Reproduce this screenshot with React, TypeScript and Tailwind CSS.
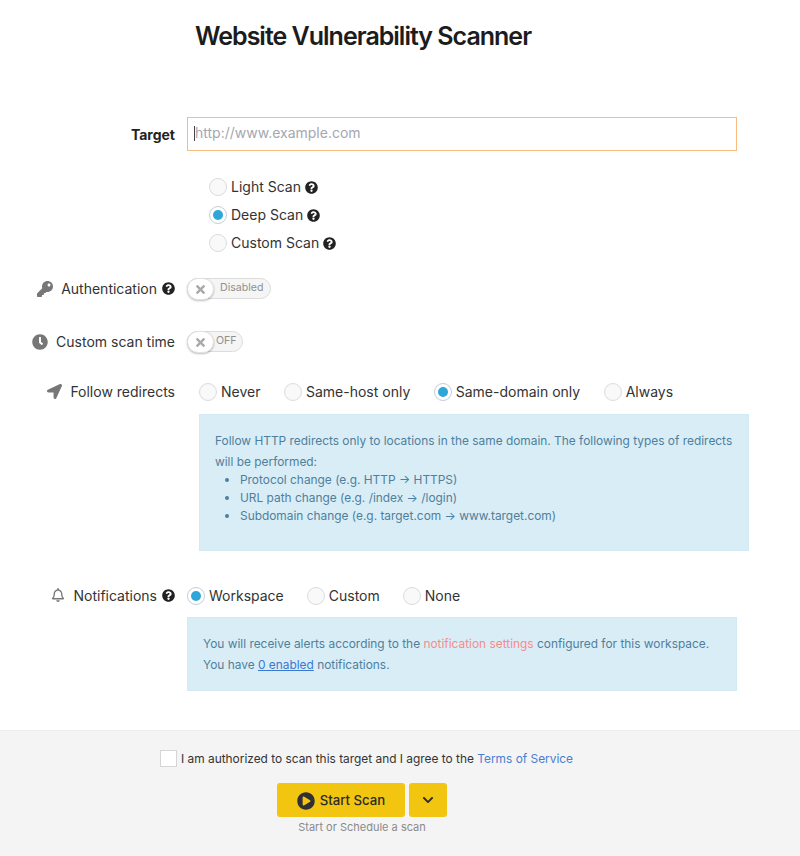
import { FaChevronDown, FaClock, FaKey, FaLocationArrow, FaPlayCircle, FaQuestionCircle, FaRegBell, FaTimes } from "react-icons/fa";
import type { ReactNode } from "react";

function Radio({ label, checked, help }: { label: string; checked?: boolean; help?: boolean }) {
  return (
    <label className="flex items-center h-[18px] text-[14px] text-[#333]">
      <span className={`w-[18px] h-[18px] rounded-full border flex items-center justify-center shrink-0 ${checked ? "border-[#c3ced9] bg-white" : "border-[#d9dcdf] bg-[#f9f9f9]"}`}>
        {checked && <span className="w-[10px] h-[10px] rounded-full bg-[#2ea6d8]" />}
      </span>
      <span className="ml-[4px] pb-px">{label}</span>
      {help && <FaQuestionCircle className="ml-[4px] text-[13px] text-[#222]" />}
    </label>
  );
}

function Toggle({ label, width, labelLeft }: { label: string; width: string; labelLeft: string }) {
  return (
    <div className={`relative h-[21px] rounded-full border border-[#dcdcdc] bg-[#f5f5f5] ${width}`}>
      <div className="absolute left-[-1px] top-[-1px] w-[27px] h-[22px] rounded-full bg-white border border-[#e2e2e2] shadow-[0_1px_2px_rgba(0,0,0,0.25)] flex items-center justify-center">
        <FaTimes className="text-[13px] text-[#a9a9a9]" />
      </div>
      <span className={`absolute top-[1px] text-[10.6px] leading-[16px] text-[#8f8f8f] ${labelLeft}`}>{label}</span>
    </div>
  );
}

function Row({ label, icon, help, className, labelClass, children }: { label: string; icon?: ReactNode; help?: boolean; className?: string; labelClass?: string; children: ReactNode }) {
  return (
    <div className={`flex items-center ${className ?? ""}`}>
      <div className={`w-[175px] shrink-0 flex items-center justify-end text-[14px] text-[#333] ${labelClass ?? ""}`}>
        {icon}
        <span>{label}</span>
        {help && <FaQuestionCircle className="ml-[5px] text-[13px] text-[#222]" />}
      </div>
      {children}
    </div>
  );
}

export default function App() {
  return (
    <div className="w-[800px] h-[856px] bg-white flex flex-col font-['Inter',sans-serif] overflow-hidden">
      <h1 className="ml-[195px] mt-[19px] text-[25px] leading-[34px] font-semibold tracking-[-1px] text-[#1c1c1c]">Website Vulnerability Scanner</h1>

      <div className="flex items-center mt-[64px]">
        <div className="w-[175px] text-right text-[14px] font-bold text-[#222]">Target</div>
        <div className="relative ml-[12px] w-[550px] h-[34px]">
          <input
            placeholder="http://www.example.com"
            className="w-full h-full border border-[#f8bb80] pl-[7px] pb-[3px] text-[14px] outline-none placeholder:text-[#a4a7b1]"
          />
          <span className="absolute left-[7px] top-[9px] w-px h-[15px] bg-[#444]" />
        </div>
      </div>

      <div className="ml-[209px] mt-[27px] flex flex-col gap-[10px]">
        <Radio label="Light Scan" help />
        <Radio label="Deep Scan" checked help />
        <Radio label="Custom Scan" help />
      </div>

      <Row label="Authentication" help className="mt-[26px] h-[21px]" icon={<FaKey className="mr-[8px] text-[16px] text-[#777]" />}>
        <div className="ml-[12px]"><Toggle label="Disabled" width="w-[84px]" labelLeft="left-[32px]" /></div>
      </Row>

      <Row label="Custom scan time" className="mt-[32px] h-[21px]" icon={<FaClock className="mr-[8px] text-[16px] text-[#777]" />}>
        <div className="ml-[12px]"><Toggle label="OFF" width="w-[56px]" labelLeft="left-[28px]" /></div>
      </Row>

      <Row label="Follow redirects" labelClass="pb-px" className="mt-[31px] h-[18px]" icon={<FaLocationArrow className="mr-[8px] text-[15px] text-[#777]" />}>
        <div className="ml-[24px] flex gap-[23.5px]">
          <Radio label="Never" />
          <Radio label="Same-host only" />
          <Radio label="Same-domain only" checked />
          <Radio label="Always" />
        </div>
      </Row>

      <div className="ml-[199px] mt-[13px] w-[550px] h-[137px] bg-[#d9edf7] border border-[#d2ebf3] pl-[15px] pr-[12px] pt-[15px] text-[11.9px] text-[#4f7f9b]">
        <p className="leading-[21px]">Follow HTTP redirects only to locations in the same domain. The following types of redirects will be performed:</p>
        <ul className="list-disc pl-[25px] leading-[18px] mt-[-1px]">
          <li>Protocol change (e.g. HTTP → HTTPS)</li>
          <li>URL path change (e.g. /index → /login)</li>
          <li>Subdomain change (e.g. target.com → www.target.com)</li>
        </ul>
      </div>

      <Row label="Notifications" help labelClass="pb-[2px]" className="mt-[36px] h-[18px]" icon={<FaRegBell className="mr-[8px] text-[14px] text-[#777]" />}>
        <div className="ml-[12px] flex gap-[23px]">
          <Radio label="Workspace" checked />
          <Radio label="Custom" />
          <Radio label="None" />
        </div>
      </Row>

      <div className="ml-[187px] mt-[12px] w-[550px] h-[74px] bg-[#d9edf7] border border-[#d2ebf3] pl-[15px] pt-[15px] text-[11.9px] leading-[21px] text-[#4f7f9b]">
        <p>You will receive alerts according to the <span className="text-[#f98a8a]">notification settings</span> configured for this workspace.</p>
        <p>You have <a className="text-[#3b78d0] underline">0 enabled</a> notifications.</p>
      </div>

      <div className="mt-[39px] flex-1 bg-[#f4f4f4] border-t border-[#eeeeee] flex flex-col">
        <div className="ml-[160px] mt-[19px] flex items-center h-[17px]">
          <span className="w-[17px] h-[17px] bg-white border border-[#d5d5d5] shrink-0" />
          <span className="ml-[4px] text-[11.9px] text-[#333]">I am authorized to scan this target and I agree to the <a className="text-[#4a7fd0]">Terms of Service</a></span>
        </div>
        <div className="ml-[277px] mt-[16px] flex gap-[4px]">
          <button className="w-[128px] h-[34px] rounded-[3px] bg-[#f2c511] flex items-center justify-center pt-px text-[13.2px] font-medium text-[#2b2b2b]">
            <FaPlayCircle className="mr-[5px] text-[18px] text-[#2f2f35]" />
            Start Scan
          </button>
          <button className="w-[38px] h-[34px] rounded-[3px] bg-[#f2c511] flex items-center justify-center">
            <FaChevronDown className="text-[12px] text-[#2f2f35]" />
          </button>
        </div>
        <div className="ml-[277px] w-[170px] mt-[2px] text-center text-[11px] leading-[17px] text-[#8a8a8a]">Start or Schedule a scan</div>
      </div>
    </div>
  );
}
